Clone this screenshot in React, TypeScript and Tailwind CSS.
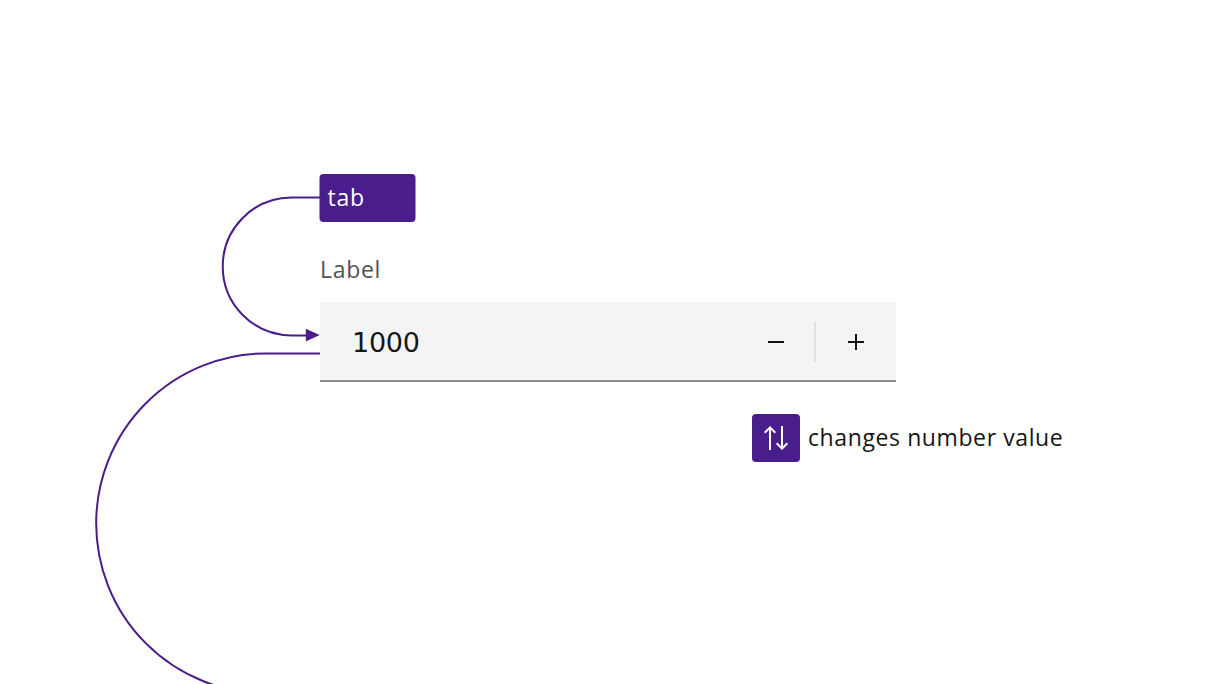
function Connectors() {
  return (
    <svg
      className="pointer-events-none absolute inset-0"
      width="1216"
      height="684"
      viewBox="0 0 1216 684"
      fill="none"
      stroke="#491d8b"
      strokeWidth="2"
      aria-hidden="true"
    >
      <path d="M320 197.5H291.7A68.9 68.9 0 0 0 291.7 335.4H307" />
      <path d="M305.8 328.7L319.7 335L305.8 341.4Z" fill="#491d8b" stroke="none" />
      <path d="M320 353.4H266A169.9 169.9 0 0 0 266 693.2" />
    </svg>
  );
}

function NumberInput() {
  return (
    <div className="mt-4 flex h-20 w-[576px] items-center border-b-2 border-[#8d8d8d] bg-[#f4f4f4] pl-8">
      <span className="flex-1 pt-1 font-['DejaVu_Sans',sans-serif] text-[27px] leading-8 tracking-[-0.3px] text-[#161616]">
        1000
      </span>
      <button className="flex h-full w-[76px] items-center justify-center" aria-label="Decrement">
        <svg width="16" height="16" viewBox="0 0 16 16" className="mt-0.5">
          <path d="M0 7H16V9H0Z" fill="#161616" />
        </svg>
      </button>
      <span className="mt-0.5 h-10 w-0.5 bg-[#e0e0e0]" />
      <button className="flex h-full w-20 items-center justify-center" aria-label="Increment">
        <svg width="16" height="16" viewBox="0 0 16 16" className="mt-0.5">
          <path d="M7 0H9V7H16V9H9V16H7V9H0V7H7Z" fill="#161616" />
        </svg>
      </button>
    </div>
  );
}

export default function App() {
  return (
    <main className="relative h-[684px] w-[1216px] overflow-hidden bg-white pl-80 pt-[174px] font-['Open_Sans',sans-serif]">
      <Connectors />
      <div className="flex h-12 w-24 -translate-x-[0.5px] items-center rounded bg-[#491d8b] pb-0.5 pl-2 text-[23px] leading-8 tracking-[0.8px] text-white">
        tab
      </div>
      <div className="mt-8 h-8 text-[23px] leading-[30px] tracking-[0.7px] text-[#525252]">Label</div>
      <NumberInput />
      <div className="ml-[432px] mt-8 flex items-center gap-2">
        <span className="flex size-12 items-center justify-center rounded bg-[#491d8b]">
          <svg width="24" height="24" viewBox="0 0 24 24" fill="none" stroke="white" strokeWidth="2">
            <path d="M6 24V1.5M0.7 6.7L6 1.4L11.3 6.7M18 0V22.5M12.7 17.3L18 22.6L23.3 17.3" />
          </svg>
        </span>
        <span className="whitespace-nowrap pb-0.5 text-[23px] leading-8 tracking-[0.6px] text-[#161616]">
          changes number value
        </span>
      </div>
    </main>
  );
}
